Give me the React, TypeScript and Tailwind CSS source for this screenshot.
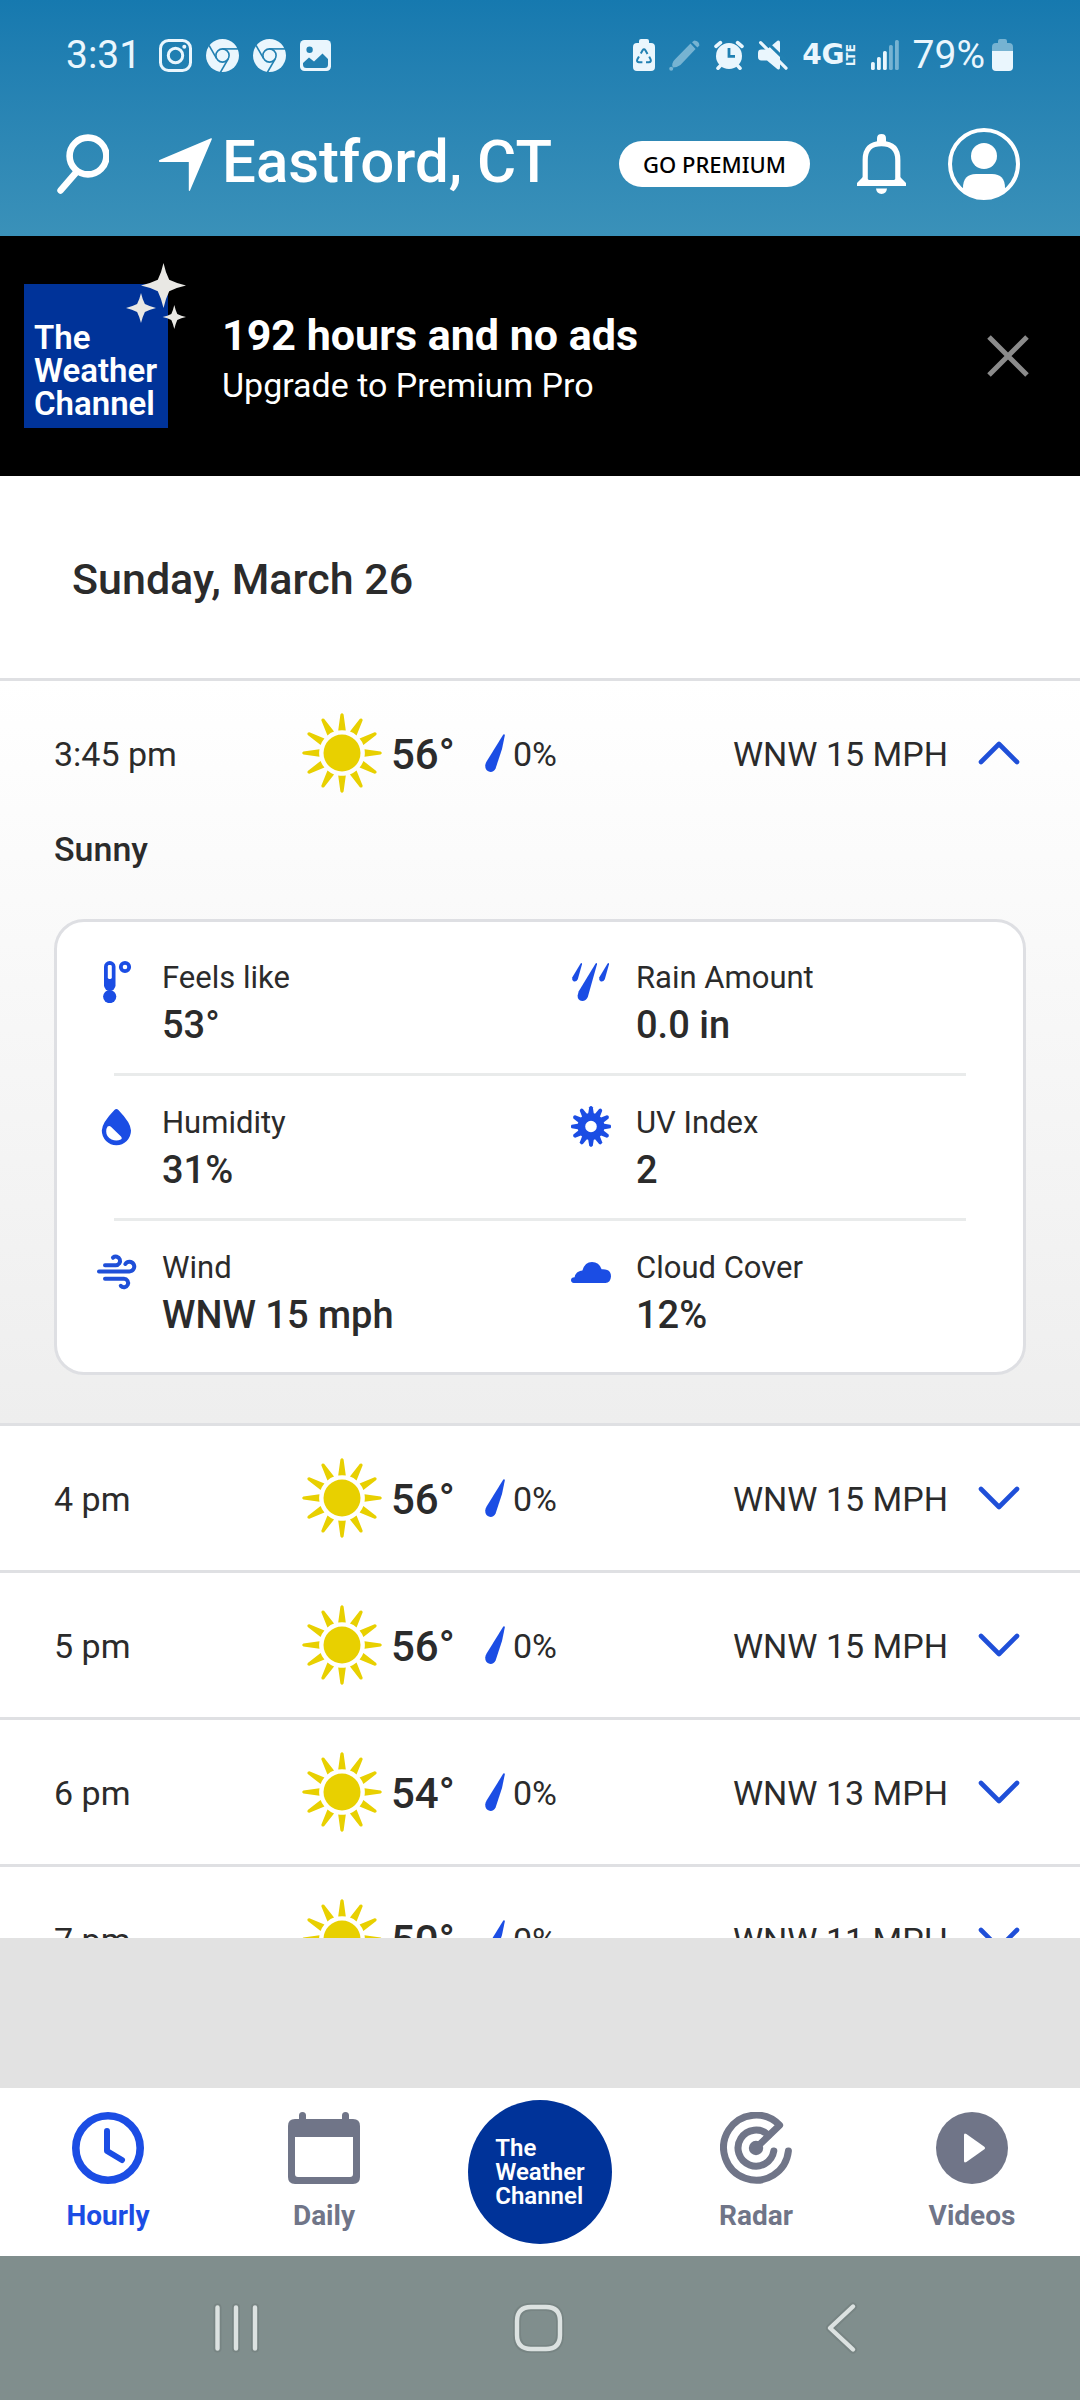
import { useState, type ReactNode } from "react";

type Hour = {
  time: string;
  temp: string;
  rain: string;
  wind: string;
};

const hours: Hour[] = [
  { time: "3:45 pm", temp: "56°", rain: "0%", wind: "WNW 15 MPH" },
  { time: "4 pm", temp: "56°", rain: "0%", wind: "WNW 15 MPH" },
  { time: "5 pm", temp: "56°", rain: "0%", wind: "WNW 15 MPH" },
  { time: "6 pm", temp: "54°", rain: "0%", wind: "WNW 13 MPH" },
  { time: "7 pm", temp: "50°", rain: "0%", wind: "WNW 11 MPH" },
];

const spokes = [0, 30, 60, 90, 120, 150, 180, 210, 240, 270, 300, 330];

function SunIcon() {
  return (
    <svg className="h-20 w-20 shrink-0" viewBox="0 0 80 80" fill="#e8d000">
      <circle cx="40" cy="40" r="18.5" />
      {spokes.map((deg) => (
        <path key={deg} d="M36.2 17.5 38.4 1.4Q40-1 41.6 1.4L43.8 17.5Q40 16.8 36.2 17.5Z" transform={`rotate(${deg} 40 40)`} />
      ))}
    </svg>
  );
}

function DropIcon() {
  return (
    <svg className="h-[38px] w-5 shrink-0" viewBox="0 0 20 38" fill="#1b4de4">
      <path d="M18.3.6Q19.8-.2 19.8 1.4L17 15 10.6 34.4Q8.6 38.4 4.6 37.8 0 36.6.2 31.4Q.4 29.6 1.6 27.6Z" />
    </svg>
  );
}

function Chevron({ open }: { open: boolean }) {
  return (
    <svg className="h-6 w-[42px] shrink-0" viewBox="0 0 42 24" fill="none" stroke="#1f4fd8" strokeWidth="4.6" strokeLinecap="round" strokeLinejoin="round">
      <path d={open ? "M3 21 21 3 39 21" : "M3 3 21 21 39 3"} />
    </svg>
  );
}

function InstagramIcon() {
  return (
    <svg className="size-[33px]" viewBox="0 0 33 33" fill="none" stroke="#eaf6fd" strokeWidth="3">
      <rect x="1.5" y="1.5" width="30" height="30" rx="8" />
      <circle cx="16.5" cy="16.5" r="7.2" />
      <circle cx="25.3" cy="7.8" r="2" fill="#eaf6fd" stroke="none" />
    </svg>
  );
}

function ChromeIcon() {
  return (
    <svg className="size-[33px]" viewBox="0 0 33 33" fill="none" stroke="#2180b2" strokeWidth="1.6">
      <circle cx="16.5" cy="16.5" r="16.5" fill="#eaf6fd" stroke="none" />
      <circle cx="16.5" cy="16.5" r="6.6" />
      <path d="M16.5 9.9H32" />
      <path d="M16.5 9.9H32" transform="rotate(120 16.5 16.5)" />
      <path d="M16.5 9.9H32" transform="rotate(240 16.5 16.5)" />
    </svg>
  );
}

function PictureIcon() {
  return (
    <svg className="size-[31px]" viewBox="0 0 31 31">
      <rect width="31" height="31" rx="4.5" fill="#eaf6fd" />
      <circle cx="9.6" cy="9.8" r="3.2" fill="#2180b2" />
      <path d="M3 23 9 17.5 14 21.5 22.5 13.5 28 19V24.5Q28 28 24.5 28H6.5Q3 28 3 24.5Z" fill="#2180b2" />
    </svg>
  );
}

function RecycleBatteryIcon() {
  return (
    <svg className="h-8 w-[22px]" viewBox="0 0 22 32">
      <path d="M6 4V2Q6 0 8 0H14Q16 0 16 2V4H18Q22 4 22 8V28Q22 32 18 32H4Q0 32 0 28V8Q0 4 4 4Z" fill="#eaf6fd" />
      <g fill="none" stroke="#2180b2" strokeWidth="2">
        <path d="M7.8 14.5 9.6 11.3Q11 9.3 12.4 11.3L14.5 15" />
        <path d="M16.2 17.6 17.6 20.3Q18.6 23 15.8 23.2H13" />
        <path d="M9.4 23.2H5.8Q3.2 22.8 4.4 20.3L6 17.4" />
      </g>
    </svg>
  );
}

function PencilIcon() {
  return (
    <svg className="size-[31px]" viewBox="0 0 31 31" fill="#76b3d2">
      <path d="M21.5 3.6 26.6 8.9 11.4 25Q7.5 27.6 4.2 27.6 2.6 26.2 3.4 23.4 4.4 20.4 6.8 18.4Z" />
      <path d="M23 2.3 25.2.6Q30.4 1.4 30.4 5.4L28.4 7.6Z" />
      <circle cx="2.2" cy="28.8" r="2" />
    </svg>
  );
}

function AlarmIcon() {
  return (
    <svg className="size-[30px]" viewBox="0 0 30 30">
      <g stroke="#eaf6fd" strokeWidth="3.6" strokeLinecap="round">
        <path d="M2 6.4 6.4 2.6M28 6.4 23.6 2.6M6.4 25.6 4 28.2M23.6 25.6 26 28.2" />
      </g>
      <circle cx="15" cy="16" r="13" fill="#eaf6fd" />
      <path d="M15 8V16.4H21" fill="none" stroke="#2180b2" strokeWidth="2.8" />
    </svg>
  );
}

function MuteIcon() {
  return (
    <svg className="size-[30px]" viewBox="0 0 30 30">
      <path d="M3.4 9.6H9L19.4.8Q22 0 22 2.6V27.2Q22 30.6 19.2 29L9 20.4H3.4Q0 20.4 0 17V13Q0 9.6 3.4 9.6Z" fill="#eaf6fd" />
      <path d="M5-1.5 33 25.5" stroke="#2180b2" strokeWidth="3" />
      <path d="M2.6 2.6 28 28.2" stroke="#eaf6fd" strokeWidth="3.2" strokeLinecap="round" />
    </svg>
  );
}

function SignalIcon() {
  return (
    <svg className="h-[30px] w-7" viewBox="0 0 28 30" fill="#eaf6fd">
      <rect x="0" y="22" width="3.8" height="8" rx="1.6" />
      <rect x="6" y="17" width="3.8" height="13" rx="1.6" />
      <rect x="12" y="11" width="3.8" height="19" rx="1.6" />
      <rect x="18" y="5" width="3.8" height="25" rx="1.6" fill="#76b3d2" />
      <rect x="24" y="0" width="3.8" height="30" rx="1.6" fill="#76b3d2" />
    </svg>
  );
}

function BatteryIcon() {
  return (
    <svg className="h-8 w-[21px]" viewBox="0 0 21 32">
      <path d="M6 4V2Q6 0 8 0H13Q15 0 15 2V4H17Q21 4 21 8V12H0V8Q0 4 4 4Z" fill="#76b3d2" />
      <path d="M0 12H21V28Q21 32 17 32H4Q0 32 0 28Z" fill="#eaf6fd" />
    </svg>
  );
}

function StatusBar() {
  return (
    <div className="flex h-[110px] items-center justify-between pl-[66px] pr-[67px] text-[#eaf6fd]">
      <div className="flex items-center gap-[14px]">
        <span className="mr-1 text-[39px] leading-none">3:31</span>
        <InstagramIcon />
        <ChromeIcon />
        <ChromeIcon />
        <PictureIcon />
      </div>
      <div className="flex items-center gap-[14px]">
        <RecycleBatteryIcon />
        <PencilIcon />
        <AlarmIcon />
        <MuteIcon />
        <span className="flex items-center font-['DejaVu_Sans',sans-serif] font-bold leading-none">
          <span className="text-[28px]">4G</span>
          <span className="rotate-180 text-[12px] leading-none [writing-mode:vertical-rl]">LTE</span>
        </span>
        <SignalIcon />
        <span className="flex items-center gap-[7px] text-[39px] leading-none">
          79%
          <BatteryIcon />
        </span>
      </div>
    </div>
  );
}

function Header() {
  return (
    <header className="shrink-0 bg-linear-to-b from-[#1679af] to-[#3a91b9] pb-[18px]">
      <StatusBar />
      <div className="flex h-[108px] items-center pl-[57px] pr-[60px]">
        <button type="button" aria-label="Search">
          <svg className="h-[60px] w-[52px]" viewBox="0 0 52 60" fill="none" stroke="#fff" strokeWidth="6.6">
            <circle cx="31" cy="22" r="18.4" />
            <path d="M19.5 38 3.6 56.4" strokeLinecap="round" />
          </svg>
        </button>
        <svg className="ml-[50px] size-[53px]" viewBox="0 0 53 53" fill="#fff">
          <path d="M.5 22 52 .2Q53.2 0 52.8 1.2L31 52.6Q30 53.6 29.8 52.2V24H.6Q-.6 23 .5 22Z" />
        </svg>
        <h1 className="ml-[10px] pb-1 text-[60px] font-medium leading-none text-white">Eastford, CT</h1>
        <button type="button" className="ml-auto h-[46px] rounded-full bg-white px-6 font-['Noto_Sans',sans-serif] text-[22px] font-medium leading-none text-black">
          GO PREMIUM
        </button>
        <button type="button" aria-label="Notifications" className="ml-[47px]">
          <svg className="h-[60px] w-[49px]" viewBox="0 0 49 60" fill="#fff">
            <path d="M20 10V4.4Q20 0 24.5 0T29 4.4V10Z" />
            <path d="M8.2 47V26Q8.2 9.6 24.5 9.6T40.8 26V47" fill="none" stroke="#fff" strokeWidth="5.2" />
            <path d="M0 52V49L6.4 42.6 12 46H37L42.6 42.6 49 49V52Z" />
            <path d="M19 54.6H30Q29.4 60 24.5 60T19 54.6Z" />
          </svg>
        </button>
        <button type="button" aria-label="Account" className="ml-[42px]">
          <svg className="size-[72px]" viewBox="0 0 72 72" fill="#fff">
            <circle cx="36" cy="36" r="34" fill="none" stroke="#fff" strokeWidth="4" />
            <circle cx="36" cy="28" r="13" />
            <path d="M15 64V60Q15 46 28 46H44Q57 46 57 60V64Q48 71 36 71T15 64Z" />
          </svg>
        </button>
      </div>
    </header>
  );
}

function PremiumBanner({ onClose }: { onClose: () => void }) {
  return (
    <section className="flex h-60 shrink-0 items-center bg-black pl-6 pr-[51px] text-white">
      <div className="relative flex size-36 shrink-0 items-end bg-[#003399] pb-2 pl-[10px]">
        <p className="text-[33px] font-semibold leading-[33px]">
          The
          <br />
          Weather
          <br />
          Channel
        </p>
        <svg className="absolute -right-[18px] -top-[21px] h-[66px] w-[60px]" viewBox="0 0 60 66" fill="#e9e8e4">
          <path d="M37.5 0Q39.4 9 43.2 16.8 51 20.6 60 22.5 51 24.4 43.2 28.2 39.4 36 37.5 45 35.6 36 31.8 28.2 24 24.4 15 22.5 24 20.6 31.8 16.8 35.6 9 37.5 0Z" />
          <path d="M15 30Q16.4 36.2 18.9 41.1 23.8 43.6 30 45 23.8 46.4 18.9 48.9 16.4 53.8 15 60 13.6 53.8 11.1 48.9 6.2 46.4 0 45 6.2 43.6 11.1 41.1 13.6 36.2 15 30Z" />
          <path d="M48.3 42Q49.4 47 51.3 51 55 53 60 54 55 55 51.3 57 49.4 61 48.3 66 47.2 61 45.3 57 41.6 55 36.6 54 41.6 53 45.3 51 47.2 47 48.3 42Z" />
        </svg>
      </div>
      <div className="ml-[54px] pt-[6px]">
        <p className="text-[43px] font-bold leading-[52px]">192 hours and no ads</p>
        <p className="text-[34px] leading-[48px]">Upgrade to Premium Pro</p>
      </div>
      <button type="button" aria-label="Close" className="ml-auto" onClick={onClose}>
        <svg className="size-[42px]" viewBox="0 0 42 42" stroke="#8b8b8b" strokeWidth="5">
          <path d="M2 2 40 40M40 2 2 40" />
        </svg>
      </button>
    </section>
  );
}

const details: { label: string; value: string; icon: ReactNode }[] = [
  {
    label: "Feels like",
    value: "53°",
    icon: (
      <>
        <rect x="7" y="2" width="11.5" height="30" rx="5.7" />
        <rect x="10.8" y="6" width="4" height="14" rx="1.4" fill="#fff" />
        <circle cx="12.7" cy="37.6" r="6.6" />
        <circle cx="28" cy="8" r="4.2" fill="none" stroke="#1b4de4" strokeWidth="3.8" />
      </>
    ),
  },
  {
    label: "Rain Amount",
    value: "0.0 in",
    icon: (
      <>
        <path d="M9.6 4.4Q11.2 3.4 11 5.2L6.8 20.2Q5.4 23 2.8 22.4.6 21 1.2 18.6Z" />
        <path d="M24.6 4.4Q26.2 3.4 26 5.2L16.8 38Q15 42 11.2 42 6.4 41 6.6 36.4L7.6 32.6Z" />
        <path d="M36.6 4.4Q38.2 3.4 38 5.2L33.8 20.2Q32.4 23 29.8 22.4 27.6 21 28.2 18.6Z" />
      </>
    ),
  },
  {
    label: "Humidity",
    value: "31%",
    icon: (
      <>
        <path d="M17.4 6Q19.4 4 21.4 6 34 19 34 26.6A14.6 14.6 0 0 1 4.8 26.6Q4.8 19 17.4 6Z" />
        <path d="M10.6 22.6Q12.4 21.2 14.2 23L24 32.4Q25.6 34.4 23.8 35.6 19.4 37.6 14.6 35.6 9.2 32.6 9.2 27.4 9.2 24.6 10.6 22.6Z" fill="#fff" />
      </>
    ),
  },
  {
    label: "UV Index",
    value: "2",
    icon: (
      <>
        <circle cx="20" cy="22.5" r="9.6" fill="none" stroke="#1b4de4" strokeWidth="7.6" />
        {spokes.map((deg) => (
          <path key={deg} d="M16.8 12 18.2 3.2Q20 1 21.8 3.2L23.2 12Z" transform={`rotate(${deg} 20 22.5)`} />
        ))}
      </>
    ),
  },
  {
    label: "Wind",
    value: "WNW 15 mph",
    icon: (
      <g fill="none" stroke="#1f4fd8" strokeWidth="4" strokeLinecap="round">
        <path d="M8 16.2H18.8A4.3 4.3 0 1 0 16 8.6" />
        <path d="M2 22.4H32.4A4.8 4.8 0 1 0 28.4 15" />
        <path d="M8 29.8H27A4.2 4.2 0 1 1 23.8 36.8" />
      </g>
    ),
  },
  {
    label: "Cloud Cover",
    value: "12%",
    icon: (
      <path d="M2.8 34Q0 33.6 0 31T3.6 28.2Q4.6 22.2 11.4 21.4 14 13 21 13 28 13 30.6 20.2 40 19.6 40 27.4 39.6 33.4 34.4 34Z" />
    ),
  },
];

function DetailCard() {
  return (
    <div className="mx-[54px] rounded-[30px] border-3 border-[#dedfe3] bg-white py-[9px]">
      {[0, 2, 4].map((start) => (
        <div key={start}>
          {start > 0 ? <div className="mx-[57px] h-[3px] bg-[#e9ebeb]" /> : null}
          <dl className="-mr-[22px] grid h-[142px] grid-cols-2 pl-10 pt-7">
            {details.slice(start, start + 2).map((item) => (
              <div key={item.label} className="flex gap-[25px]">
                <svg className="h-11 w-10 shrink-0" viewBox="0 0 40 44" fill="#1b4de4">
                  {item.icon}
                </svg>
                <div>
                  <dt className="text-[31px] leading-[37px]">{item.label}</dt>
                  <dd className="text-[38px] font-medium leading-[58px]">{item.value}</dd>
                </div>
              </div>
            ))}
          </dl>
        </div>
      ))}
    </div>
  );
}

function HourRow({ hour, open, onToggle }: { hour: Hour; open: boolean; onToggle: () => void }) {
  return (
    <li className={`border-t-3 border-[#dfe0e3] ${open ? "bg-linear-to-b from-white to-[#eeeeee] pb-12" : "bg-white"}`}>
      <button type="button" aria-expanded={open} onClick={onToggle} className="flex h-36 w-full items-center pl-[54px] pr-[60px] text-left text-[34px]">
        <span className="w-[248px] pt-[2px]">{hour.time}</span>
        <SunIcon />
        <span className="w-[103px] pl-[9px] pt-[2px] text-[42px] font-medium">{hour.temp}</span>
        <DropIcon />
        <span className="pl-2 pt-[2px]">{hour.rain}</span>
        <span className="ml-auto mr-[30px] pt-[2px]">{hour.wind}</span>
        <Chevron open={open} />
      </button>
      {open ? (
        <>
          <p className="mb-[46px] px-[54px] text-[34px] font-medium leading-[48px]">Sunny</p>
          <DetailCard />
        </>
      ) : null}
    </li>
  );
}

const tabs: { label: string; icon: ReactNode }[] = [
  {
    label: "Hourly",
    icon: (
      <g fill="none" stroke="currentColor" strokeLinecap="round" strokeLinejoin="round">
        <circle cx="36" cy="36" r="32.2" strokeWidth="7.6" />
        <path d="M35 19V39L50 48" strokeWidth="6" />
      </g>
    ),
  },
  {
    label: "Daily",
    icon: (
      <path
        fillRule="evenodd"
        d="M11 7V3.5A3.5 3.5 0 0 1 18 3.5V7H54V3.5A3.5 3.5 0 0 1 61 3.5V7H65Q72 7 72 14V65Q72 72 65 72H7Q0 72 0 65V14Q0 7 7 7ZM7 25V62Q7 65 10 65H62Q65 65 65 62V25Z"
      />
    ),
  },
  {
    label: "Radar",
    icon: (
      <g fill="none" stroke="currentColor" strokeWidth="7" strokeLinecap="round" strokeLinejoin="round">
        <path d="M36 36 59.6 13.2A32.5 32.5 0 1 0 68.4 39" />
        <path d="M48.6 23.2A18 18 0 1 0 53.8 39" />
        <circle cx="36" cy="36" r="7.2" fill="currentColor" stroke="none" />
      </g>
    ),
  },
  {
    label: "Videos",
    icon: (
      <>
        <circle cx="36" cy="36" r="36" />
        <path d="M28 23Q28 20.6 30.4 22L48 34.4Q50 36 48 37.6L30.4 50Q28 51.2 28 49Z" fill="#fff" />
      </>
    ),
  },
];

function Tab({ label, icon }: { label: string; icon: ReactNode }) {
  const color = label === "Hourly" ? "text-[#1b4de4]" : "text-[#707588]";
  return (
    <a href="#" className={`flex flex-1 flex-col items-center pt-6 ${color}`}>
      <svg className="size-[72px]" viewBox="0 0 72 72" fill="currentColor">
        {icon}
      </svg>
      <span className="mt-3 text-[28px] font-bold leading-10">{label}</span>
    </a>
  );
}

function TabBar() {
  return (
    <nav className="flex h-[168px] shrink-0 bg-white">
      {tabs.slice(0, 2).map((tab) => (
        <Tab key={tab.label} {...tab} />
      ))}
      <div className="flex flex-1 items-center justify-center">
        <a href="#" className="flex size-36 items-center justify-center rounded-full bg-[#003399]">
          <span className="text-[24px] font-semibold leading-6 text-white">
            The
            <br />
            Weather
            <br />
            Channel
          </span>
        </a>
      </div>
      {tabs.slice(2).map((tab) => (
        <Tab key={tab.label} {...tab} />
      ))}
    </nav>
  );
}

function SystemButton({ label, d }: { label: string; d: string }) {
  return (
    <button type="button" aria-label={label}>
      <svg className="size-[54px]" viewBox="0 0 54 54" fill="none" strokeLinecap="round" strokeLinejoin="round">
        <path d={d} stroke="#778483" strokeWidth="8" />
        <path d={d} stroke="#dce2e1" strokeWidth="4.4" />
      </svg>
    </button>
  );
}

function SystemBar() {
  return (
    <div className="flex h-36 shrink-0 items-center justify-between bg-[#808e8d] pl-[209px] pr-[212px]">
      <SystemButton label="Recent apps" d="M8.5 6.5V47.5M27 6.5V47.5M46 6.5V47.5" />
      <SystemButton label="Home" d="M19 6H34Q48 6 48 20V34Q48 48 34 48H19Q5 48 5 34V20Q5 6 19 6Z" />
      <SystemButton label="Back" d="M39 5.5 16 27 39 48.5" />
    </div>
  );
}

export default function App() {
  const [openHour, setOpenHour] = useState<string | null>("3:45 pm");
  const [showBanner, setShowBanner] = useState(true);

  return (
    <div className="flex h-screen flex-col overflow-hidden bg-[#e2e2e2] font-[Roboto,sans-serif] text-[#2b2b2b]">
      <Header />
      {showBanner ? <PremiumBanner onClose={() => setShowBanner(false)} /> : null}
      <main className="min-h-0 flex-1 overflow-hidden bg-white">
        <h2 className="px-[72px] pb-[70px] pt-[74px] text-[43px] font-medium leading-[58px]">Sunday, March 26</h2>
        <ul>
          {hours.map((hour) => (
            <HourRow
              key={hour.time}
              hour={hour}
              open={openHour === hour.time}
              onToggle={() => setOpenHour(openHour === hour.time ? null : hour.time)}
            />
          ))}
        </ul>
      </main>
      {/* ad slot */}
      <div className="h-[150px] shrink-0" />
      <TabBar />
      <SystemBar />
    </div>
  );
}
